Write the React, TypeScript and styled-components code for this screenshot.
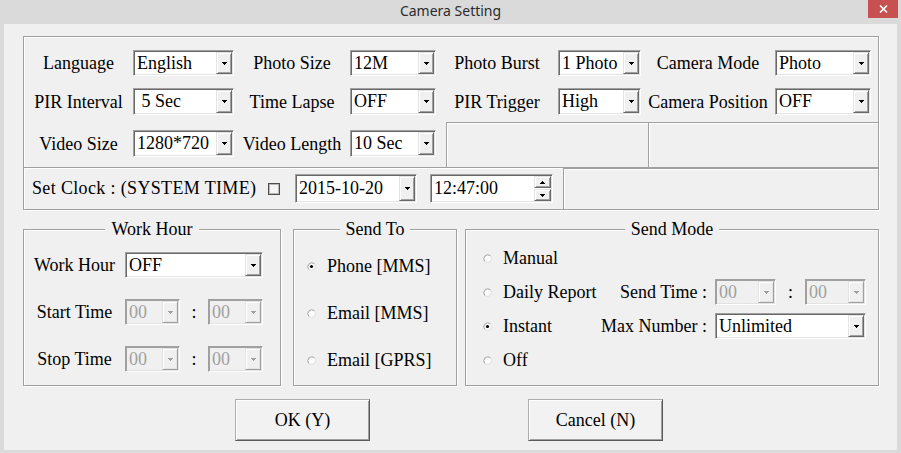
import styled, { createGlobalStyle } from "styled-components";

const GlobalStyle = createGlobalStyle`
  html, body {
    margin: 0;
    padding: 0;
    background: #dadada;
  }
  body {
    font-family: "Liberation Serif", "Times New Roman", serif;
    font-size: 18px;
    color: #000;
  }
`;

// tiny pixel triangle used by drop buttons and spinners
const Arrow = ({ up, off }: { up?: boolean; off?: boolean }) => {
  const fill = off ? "#a0a0a0" : "#000";
  return (
    <svg width="5" height="3" viewBox="0 0 5 3" shapeRendering="crispEdges">
      <rect x="0" y={up ? 2 : 0} width="5" height="1" fill={fill} />
      <rect x="1" y="1" width="3" height="1" fill={fill} />
      <rect x="2" y={up ? 0 : 2} width="1" height="1" fill={fill} />
    </svg>
  );
};

const Radio = ({ checked }: { checked?: boolean }) => (
  <svg width="9" height="9" viewBox="0 0 9 9">
    <circle cx="4.5" cy="4.5" r="4" fill="#fcfcfc" stroke="#dedede" />
    <path d="M1.7 7.3 A4 4 0 0 1 7.3 1.7" stroke="#a8a8a8" fill="none" />
    {checked && <circle cx="4.5" cy="4.5" r="1.6" fill="#000" />}
  </svg>
);

const Combo = ({ value, w, h = 26, off }: { value: string; w: number; h?: number; off?: boolean }) => (
  <ComboBox $w={w} $h={h} $off={off}>
    <ComboText $h={h} $off={off}>{value}</ComboText>
    <DropButton $off={off}>
      <Arrow off={off} />
    </DropButton>
  </ComboBox>
);

const App = () => {
  return (
    <Window>
      <GlobalStyle />
      <TitleBar>
        <Title>Camera Setting</Title>
        <CloseButton>
          <svg width="9" height="8" viewBox="0 0 9 8">
            <path d="M1 0.5 L8 7.5 M8 0.5 L1 7.5" stroke="#fff" strokeWidth="1.6" />
          </svg>
        </CloseButton>
      </TitleBar>
      <Client>
        <Panel>
          <SettingsGrid>
            <Label>Language</Label>
            <Combo value="English" w={101} />
            <Label>Photo Size</Label>
            <Combo value="12M" w={86} />
            <Label>Photo Burst</Label>
            <Combo value="1 Photo" w={83} />
            <Label>Camera Mode</Label>
            <Combo value="Photo" w={96} />

            <Label>PIR Interval</Label>
            <Combo value=" 5 Sec" w={101} h={27} />
            <Label>Time Lapse</Label>
            <Combo value="OFF" w={86} h={27} />
            <Label>PIR Trigger</Label>
            <Combo value="High" w={83} h={27} />
            <Label>Camera Position</Label>
            <Combo value="OFF" w={96} h={27} />
          </SettingsGrid>
          <VideoRow>
            <VideoCell>
              <Label>Video Size</Label>
              <Combo value="1280*720" w={101} h={27} />
              <Label>Video Length</Label>
              <Combo value="10 Sec" w={86} h={27} />
            </VideoCell>
            <EmptyCell $w={202} />
            <EmptyCell />
          </VideoRow>
          <ClockRow>
            <ClockCell>
              <ClockText>Set Clock : (SYSTEM TIME)</ClockText>
              <CheckBox />
              <DateSlot>
                <Combo value="2015-10-20" w={122} h={29} />
              </DateSlot>
              <TimeBox>
                <ComboText $h={29}>12:47:00</ComboText>
                <SpinColumn>
                  <SpinButton>
                    <Arrow up />
                  </SpinButton>
                  <SpinButton>
                    <Arrow />
                  </SpinButton>
                </SpinColumn>
              </TimeBox>
            </ClockCell>
            <EmptyCell />
          </ClockRow>
        </Panel>

        <GroupsRow>
          <GroupBox $w={258}>
            <GroupTitle>Work Hour</GroupTitle>
            <WorkGrid>
              <Label>Work Hour</Label>
              <Span3>
                <Combo value="OFF" w={138} />
              </Span3>
              <Label>Start Time</Label>
              <Combo value="00" w={55} off />
              <Label>:</Label>
              <Combo value="00" w={55} off />
              <Label>Stop Time</Label>
              <Combo value="00" w={55} off />
              <Label>:</Label>
              <Combo value="00" w={55} off />
            </WorkGrid>
          </GroupBox>

          <GroupBox $w={164} $gap={12}>
            <GroupTitle>Send To</GroupTitle>
            <RadioList>
              <RadioItem $indent={13}>
                <Radio checked />
                <span>Phone [MMS]</span>
              </RadioItem>
              <RadioItem $indent={13}>
                <Radio />
                <span>Email [MMS]</span>
              </RadioItem>
              <RadioItem $indent={13}>
                <Radio />
                <span>Email [GPRS]</span>
              </RadioItem>
            </RadioList>
          </GroupBox>

          <GroupBox $w={414} $gap={8}>
            <GroupTitle>Send Mode</GroupTitle>
            <ModeGrid>
              <RadioItem $indent={17}>
                <Radio />
                <span>Manual</span>
              </RadioItem>
              <Filler />
              <RadioItem $indent={17}>
                <Radio />
                <span>Daily Report</span>
              </RadioItem>
              <FieldLabel>Send Time :</FieldLabel>
              <Combo value="00" w={61} off />
              <Label>:</Label>
              <Combo value="00" w={61} off />
              <RadioItem $indent={17}>
                <Radio checked />
                <span>Instant</span>
              </RadioItem>
              <FieldLabel>Max Number :</FieldLabel>
              <Span3>
                <Combo value="Unlimited" w={151} />
              </Span3>
              <RadioItem $indent={17}>
                <Radio />
                <span>Off</span>
              </RadioItem>
            </ModeGrid>
          </GroupBox>
        </GroupsRow>

        <ButtonRow>
          <PushButton>OK (Y)</PushButton>
          <PushButton>Cancel (N)</PushButton>
        </ButtonRow>
      </Client>
    </Window>
  );
};

const Window = styled.div`
  width: 901px;
  height: 453px;
  display: flex;
  flex-direction: column;
  background: #dadada;
  overflow: hidden;
`;

const TitleBar = styled.div`
  height: 24px;
  flex: 0 0 24px;
  display: grid;
  grid-template-columns: 1fr auto 1fr;
  align-items: start;
`;

const Title = styled.div`
  grid-column: 2;
  font-family: "Noto Sans", "Open Sans", sans-serif;
  font-size: 14px;
  line-height: 21px;
  color: #2b2b2b;
`;

const CloseButton = styled.div`
  grid-column: 3;
  justify-self: end;
  margin-right: 3px;
  width: 30px;
  height: 18px;
  background: #c75050;
  display: flex;
  align-items: center;
  justify-content: center;
`;

const Client = styled.div`
  flex: 1;
  margin: 0 4px 3px 4px;
  background: #f0f0f0;
  padding: 12px 0 0 19px;
  display: flex;
  flex-direction: column;
`;

const Panel = styled.div`
  box-sizing: border-box;
  width: 856px;
  border: 1px solid #a0a0a0;
  box-shadow: 1px 1px 0 #fff, inset 1px 1px 0 #fff;
`;

const SettingsGrid = styled.div`
  display: grid;
  grid-template-columns: 109px 101px 116px 86px 122px 83px 134px 96px;
  grid-template-rows: 26px 27px;
  row-gap: 12px;
  padding: 13px 0 7px;
`;

const Label = styled.div`
  align-self: center;
  text-align: center;
  white-space: nowrap;
  line-height: 20px;
`;

const FieldLabel = styled.div`
  align-self: center;
  text-align: right;
  padding-right: 8px;
  white-space: nowrap;
  line-height: 20px;
`;

const VideoRow = styled.div`
  display: flex;
  height: 45px;
`;

const VideoCell = styled.div`
  width: 422px;
  display: grid;
  grid-template-columns: 109px 101px 116px 86px;
  grid-template-rows: 27px;
  padding-top: 8px;
`;

const EmptyCell = styled.div<{ $w?: number }>`
  box-sizing: border-box;
  ${(p) => (p.$w ? `width: ${p.$w}px;` : "flex: 1;")}
  border-left: 1px solid #a0a0a0;
  border-top: 1px solid #a0a0a0;
  box-shadow: inset 1px 1px 0 #fff;
`;

const ClockRow = styled.div`
  box-sizing: border-box;
  display: flex;
  height: 42px;
  border-top: 1px solid #a0a0a0;
  box-shadow: inset 0 1px 0 #fff;
`;

const ClockCell = styled.div`
  width: 539px;
  display: flex;
  align-items: center;
  padding-left: 8px;
  box-sizing: border-box;
  white-space: nowrap;
`;

const ClockText = styled.span`
  flex: 0 0 236px;
  letter-spacing: 0.35px;
`;

const CheckBox = styled.span`
  box-sizing: border-box;
  width: 12px;
  height: 12px;
  border: 1px solid #4d4d4d;
  box-shadow: inset 0 0 0 1px #b8b8b8;
  background: #f4f4f4;
`;

const DateSlot = styled.div`
  margin-left: 15px;
`;

const ComboBox = styled.div<{ $w: number; $h: number; $off?: boolean }>`
  box-sizing: border-box;
  width: ${(p) => p.$w}px;
  height: ${(p) => p.$h}px;
  display: flex;
  align-items: stretch;
  padding: 1px;
  background: ${(p) => (p.$off ? "#f0f0f0" : "#fff")};
  border: 1px solid;
  border-color: #a0a0a0 #fff #fff #a0a0a0;
  box-shadow: inset 1px 1px 0 ${(p) => (p.$off ? "#a0a0a0" : "#696969")}, inset -1px -1px 0 #e3e3e3;
`;

const ComboText = styled.div<{ $h: number; $off?: boolean }>`
  flex: 1;
  padding-left: 2px;
  line-height: ${(p) => p.$h - 4}px;
  white-space: pre;
  overflow: hidden;
  color: ${(p) => (p.$off ? "#a0a0a0" : "#000")};
`;

const DropButton = styled.div<{ $off?: boolean }>`
  box-sizing: border-box;
  width: 16px;
  display: flex;
  align-items: center;
  justify-content: center;
  background: #f0f0f0;
  border: 1px solid;
  border-color: #e3e3e3 ${(p) => (p.$off ? "#a0a0a0" : "#696969")} ${(p) => (p.$off ? "#a0a0a0" : "#696969")} #e3e3e3;
  box-shadow: inset 1px 1px 0 #fff, inset -1px -1px 0 ${(p) => (p.$off ? "#e3e3e3" : "#a0a0a0")};
`;

const TimeBox = styled.div`
  box-sizing: border-box;
  width: 123px;
  height: 29px;
  margin-left: 13px;
  display: flex;
  padding: 1px;
  background: #fff;
  border: 1px solid;
  border-color: #a0a0a0 #fff #fff #a0a0a0;
  box-shadow: inset 1px 1px 0 #696969, inset -1px -1px 0 #e3e3e3;
`;

const SpinColumn = styled.div`
  width: 17px;
  display: flex;
  flex-direction: column;
  gap: 1px;
`;

const SpinButton = styled.div`
  box-sizing: border-box;
  flex: 1;
  display: flex;
  align-items: center;
  justify-content: center;
  background: #f0f0f0;
  border: 1px solid;
  border-color: #e3e3e3 #696969 #696969 #e3e3e3;
  box-shadow: inset 1px 1px 0 #fff, inset -1px -1px 0 #a0a0a0;
`;

const GroupsRow = styled.div`
  display: flex;
  margin-top: 19px;
  height: 157px;
`;

const GroupBox = styled.div<{ $w: number; $gap?: number }>`
  box-sizing: border-box;
  width: ${(p) => p.$w}px;
  margin-left: ${(p) => p.$gap ?? 0}px;
  border: 1px solid #a0a0a0;
  box-shadow: 1px 1px 0 #fff, inset 1px 1px 0 #fff;
  display: flex;
  flex-direction: column;
`;

const GroupTitle = styled.div`
  align-self: center;
  margin-top: -10px;
  padding: 0 6px;
  height: 18px;
  line-height: 18px;
  background: #f0f0f0;
  white-space: nowrap;
`;

const WorkGrid = styled.div`
  display: grid;
  grid-template-columns: 101px 55px 28px 55px;
  grid-auto-rows: 26px;
  row-gap: 21px;
  padding-top: 14px;
`;

const Span3 = styled.div`
  grid-column: span 3;
`;

const RadioList = styled.div`
  display: flex;
  flex-direction: column;
  gap: 21px;
  padding-top: 15px;
`;

const RadioItem = styled.div<{ $indent: number }>`
  height: 26px;
  display: flex;
  align-items: center;
  gap: 11px;
  padding-left: ${(p) => p.$indent}px;
  white-space: nowrap;
  grid-column: 1;
`;

const ModeGrid = styled.div`
  display: grid;
  grid-template-columns: 135px 114px 61px 29px 61px;
  grid-auto-rows: 26px;
  row-gap: 8px;
  padding-top: 7px;
`;

const Filler = styled.div`
  grid-column: span 4;
`;

const ButtonRow = styled.div`
  display: flex;
  gap: 158px;
  margin-top: 13px;
  padding-left: 212px;
`;

const PushButton = styled.div`
  box-sizing: border-box;
  width: 135px;
  height: 42px;
  display: flex;
  align-items: center;
  justify-content: center;
  background: #f2f2f2;
  border: 1px solid;
  border-color: #adadad #5a5a5a #5a5a5a #adadad;
  box-shadow: inset 1px 1px 0 #fff, inset -1px -1px 0 #a0a0a0;
`;

export default App;
